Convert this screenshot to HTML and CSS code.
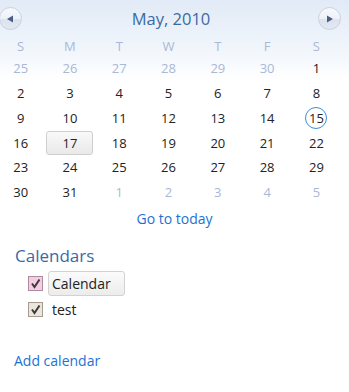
FILE: index.html
```html
<!DOCTYPE html>
<html lang="en">
<head>
    <meta charset="UTF-8" />
    <title>Calendar</title>
    <link rel="stylesheet" href="styles.css">
</head>
<body>
    <div class="month-view">
        <div class="month-header">
            <button class="nav-btn prev" aria-label="Previous month">
                <svg width="8" height="8" viewBox="0 0 8 8"><path d="M1 4 L7 0.5 L7 7.5 Z" fill="#4a5f85"/></svg>
            </button>
            <div class="month-title">May, 2010</div>
            <button class="nav-btn next" aria-label="Next month">
                <svg width="8" height="8" viewBox="0 0 8 8"><path d="M7 4 L1 0.5 L1 7.5 Z" fill="#4a5f85"/></svg>
            </button>
        </div>

        <div class="day-grid">
            <div class="dow">S</div><div class="dow">M</div><div class="dow">T</div><div class="dow">W</div><div class="dow">T</div><div class="dow">F</div><div class="dow">S</div>

            <div class="day other">25</div><div class="day other">26</div><div class="day other">27</div><div class="day other">28</div><div class="day other">29</div><div class="day other">30</div><div class="day">1</div>
            <div class="day">2</div><div class="day">3</div><div class="day">4</div><div class="day">5</div><div class="day">6</div><div class="day">7</div><div class="day">8</div>
            <div class="day">9</div><div class="day">10</div><div class="day">11</div><div class="day">12</div><div class="day">13</div><div class="day">14</div><div class="day"><span class="today">15</span></div>
            <div class="day">16</div><div class="day"><span class="selected">17</span></div><div class="day">18</div><div class="day">19</div><div class="day">20</div><div class="day">21</div><div class="day">22</div>
            <div class="day">23</div><div class="day">24</div><div class="day">25</div><div class="day">26</div><div class="day">27</div><div class="day">28</div><div class="day">29</div>
            <div class="day">30</div><div class="day">31</div><div class="day other">1</div><div class="day other">2</div><div class="day other">3</div><div class="day other">4</div><div class="day other">5</div>
        </div>

        <a class="today-link" href="#">Go to today</a>
    </div>

    <div class="calendars">
        <h2>Calendars</h2>
        <ul class="cal-list">
            <li>
                <span class="check pink">
                    <svg width="11" height="11" viewBox="0 0 11 11"><path d="M2 5.5 L4.5 9 L9.5 1.5" fill="none" stroke="#3a3a3a" stroke-width="2"/></svg>
                </span>
                <span class="cal-name active">Calendar</span>
            </li>
            <li>
                <span class="check beige">
                    <svg width="11" height="11" viewBox="0 0 11 11"><path d="M2 5.5 L4.5 9 L9.5 1.5" fill="none" stroke="#3a3a3a" stroke-width="2"/></svg>
                </span>
                <span class="cal-name">test</span>
            </li>
        </ul>
        <a class="add-link" href="#">Add calendar</a>
    </div>
</body>
</html>
```

FILE: styles.css
```css
:root {
    --link: #1b72d5;
    --title: #3a6aa5;
    --muted: #a9b8d5;
    --text: #222;
}

body {
    margin: 0;
    font-family: "Open Sans", "Noto Sans", sans-serif;
    background: #fff;
    color: var(--text);
    width: 349px;
    overflow: hidden;
}

.month-view {
    background: linear-gradient(#e1eaf6 0px, #f3f7fc 55px, #fff 80px);
    padding-top: 7px;
}

.month-header {
    display: flex;
    align-items: center;
    justify-content: space-between;
    height: 23px;
    padding: 0 8px 0 0;
}

.nav-btn {
    width: 23px;
    height: 23px;
    border-radius: 50%;
    border: 1px solid #c9d2df;
    background: linear-gradient(#f7f9fc 0%, #eef2f8 50%, #dbe3ef 55%, #e3e9f2 100%);
    padding: 0;
    display: flex;
    align-items: center;
    justify-content: center;
}

.nav-btn.prev {
    margin-left: -1px;
}

.nav-btn.prev svg {
    margin-left: -2px;
}

.nav-btn.next svg {
    margin-left: 2px;
}

.month-title {
    font-size: 16.5px;
    color: var(--title);
    margin-left: 2px;
}

.day-grid {
    display: grid;
    grid-template-columns: repeat(7, 49.3px);
    grid-template-rows: 21.8px;
    grid-auto-rows: 24.8px;
    margin: 4px 0 0 -4px;
    font-size: 13px;
}

.dow {
    color: var(--muted);
    text-align: center;
    line-height: 24px;
}

.day {
    display: flex;
    align-items: center;
    justify-content: center;
}

.day.other {
    color: var(--muted);
}

.selected {
    width: 47px;
    height: 24px;
    display: flex;
    align-items: center;
    justify-content: center;
    border: 1px solid #cfcfcf;
    border-radius: 3px;
    background: linear-gradient(#f9f9f9, #e9e9e9);
    box-sizing: border-box;
}

.today {
    width: 22px;
    height: 22px;
    display: flex;
    align-items: center;
    justify-content: center;
    border: 1.5px solid #3d8ae0;
    border-radius: 50%;
    box-sizing: border-box;
}

.today-link {
    display: block;
    text-align: center;
    color: var(--link);
    text-decoration: none;
    font-size: 14px;
    margin-top: 4px;
}

.calendars {
    padding: 16px 0 0 15px;
}

.calendars h2 {
    font-size: 17px;
    font-weight: normal;
    color: var(--title);
    margin: 0 0 4px 0;
}

.cal-list {
    list-style: none;
    margin: 0;
    padding: 0 0 0 13px;
}

.cal-list li {
    display: flex;
    align-items: center;
    gap: 5px;
    height: 26px;
    font-size: 14px;
}

.check {
    width: 15px;
    height: 15px;
    box-sizing: border-box;
    display: flex;
    align-items: center;
    justify-content: center;
}

.check.pink {
    background: #f5cde3;
    border: 1px solid #b08aa0;
}

.check.beige {
    background: #ece5dc;
    border: 1px solid #a59a8f;
}

.cal-name {
    padding: 2px 8px 2px 3px;
    border: 1px solid transparent;
}

.cal-name.active {
    border-color: #d2d2d2;
    border-radius: 3px;
    background: linear-gradient(#fbfbfb, #ececec);
    width: 64px;
    height: 19px;
}

.add-link {
    display: inline-block;
    color: var(--link);
    text-decoration: none;
    font-size: 14px;
    margin-top: 28px;
    margin-left: -1px;
}
```
